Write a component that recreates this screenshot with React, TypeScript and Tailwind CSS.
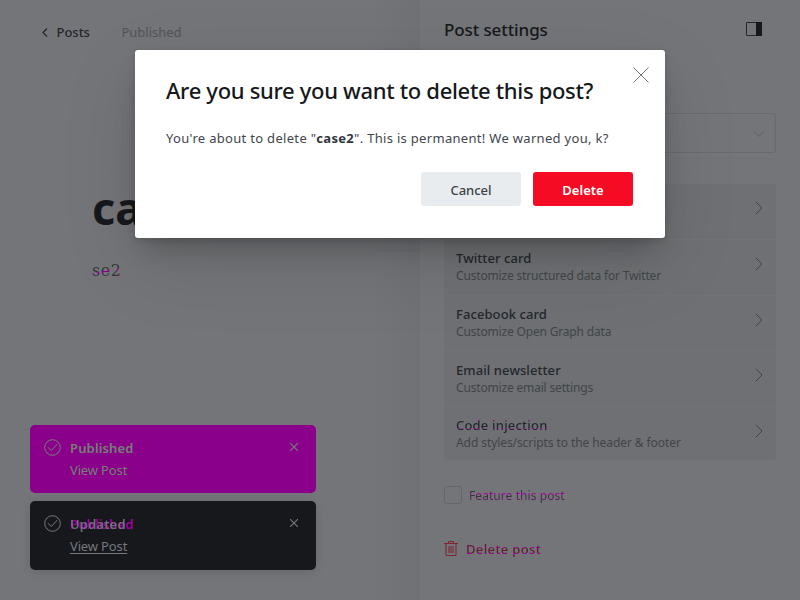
import type { ReactNode } from 'react';

const BASE = "font-['Noto_Sans','Open_Sans',sans-serif] whitespace-nowrap";

function Chevron() {
  return (
    <svg width="8" height="14" viewBox="0 0 8 14" className="mt-[17px] shrink-0" fill="none" stroke="#43484e" strokeWidth="1">
      <path d="M0.7 0.7 7 7 .7 13.3" />
    </svg>
  );
}

function SettingRow({ title, detail, last }: { title: ReactNode; detail: ReactNode; last?: boolean }) {
  return (
    <div className={`flex items-start justify-between pl-3 pr-[13px] ${last ? 'h-[53px]' : 'h-[55.8px] border-b border-[#717376]'}`}>
      <div className="pt-[9.3px]">
        <div className="h-[18px] text-[13px] font-medium leading-[18px] tracking-[0.08px] text-[#24272b]">{title}</div>
        <div className="h-[17px] text-[12px] leading-[17px] tracking-[-0.17px] text-[#424548]">{detail}</div>
      </div>
      <Chevron />
    </div>
  );
}

function CheckCircle({ color }: { color: string }) {
  return (
    <svg width="17" height="17" viewBox="0 0 17 17" className="shrink-0" fill="none" stroke={color}>
      <circle cx="8.5" cy="8.5" r="7.8" />
      <path d="m4.3 8.5 3 3 5.6-6.1" strokeLinecap="round" />
    </svg>
  );
}

function Toast({ color, surface, link, children }: { color: string; surface: string; link: string; children: ReactNode }) {
  return (
    <div className={`flex w-[286px] rounded-[5px] pl-3.5 pr-[18px] pt-[14px] ${surface}`}>
      <CheckCircle color={color} />
      <div className="ml-[9px] flex-1">
        <div className="relative h-[18px] text-[13px] font-semibold leading-[18px] tracking-[0.15px]">{children}</div>
        <div className={`mt-1 h-[18px] text-[13px] leading-[18px] tracking-[-0.14px] underline underline-offset-2 ${link}`}>View Post</div>
      </div>
      <svg width="8" height="8" viewBox="0 0 8 8" className="mt-[4px]" fill="none" stroke={color} strokeWidth="1.1">
        <path d="m0 0 8 8M8 0 0 8" />
      </svg>
    </div>
  );
}

export default function App() {
  return (
    <div className={`relative flex h-[600px] w-[800px] overflow-hidden bg-[#737578] ${BASE}`}>
      <main className="flex w-[420px] flex-col bg-[linear-gradient(90deg,#737578_0,#737578_370px,#6f7174_420px)]">
        <header className="flex h-16 items-center pl-[42px] pt-px text-[13px]">
          <svg width="6" height="9" viewBox="0 0 6 9" fill="none" stroke="#24272b" strokeWidth="1.2">
            <path d="M5 .5 1 4.5l4 4" />
          </svg>
          <span className="ml-[8.5px] w-[65px] pt-px font-medium tracking-[-0.02px] text-[#24272b]">Posts</span>
          <span className="pt-px tracking-[-0.02px] text-[#515457]">Published</span>
        </header>
        <div className="ml-[92px] mt-[112px] h-[64px] text-[45px] font-bold leading-[64px] text-[#16181b]">case2</div>
        <div className="ml-[92px] mt-[19px] h-6 w-fit bg-[linear-gradient(170deg,#343639_48%,#900090_48%,#900090_56%,#343639_57%,#343639_72%,#a000a0_73%)] bg-clip-text font-['DejaVu_Serif','Liberation_Serif',serif] text-[16px] leading-6 tracking-[0.5px] text-transparent">se2</div>
        <div className="ml-[30px] mt-[142px] flex flex-col gap-2">
          <Toast color="#748074" surface="h-[68px] bg-[#8b008b]" link="text-[#748074] decoration-[#960096]">
            <span className="text-[#748074]">Published</span>
          </Toast>
          <Toast color="#77797c" surface="h-[69px] bg-[#16181c] shadow-[0_2px_10px_rgba(0,0,0,0.12)]" link="text-[#77797c]">
            <span className="absolute left-0 top-0 text-[#a000a0]">Published</span>
            <span className="absolute left-0 top-0 text-[#77797c] opacity-90">Updated</span>
          </Toast>
        </div>
      </main>

      <aside className="flex w-[380px] flex-col pl-6 pr-6">
        <header className="flex h-[60px] items-center justify-between pr-[14px]">
          <h2 className="text-[17px] font-medium tracking-[-0.1px] text-[#16181b]">Post settings</h2>
          <svg width="16" height="14" viewBox="0 0 16 14" fill="none" className="-mt-[2px]">
            <rect x=".5" y=".5" width="15" height="13" rx=".5" stroke="#24272b" />
            <path d="M10 0h6v14h-6z" fill="#16181b" />
          </svg>
        </header>
        <div className="mt-[53px] flex h-10 items-center justify-end rounded-[3px] border border-[#696b6e] pr-[11px]">
          <svg width="10" height="6" viewBox="0 0 10 6" fill="none" stroke="#5c5f62" className="mt-0.5">
            <path d="m.4.5 4.6 4.8L9.6.5" />
          </svg>
        </div>
        <section className="mt-[31px] rounded-[3px] bg-[#6e7073]">
          <SettingRow title="Meta data" detail="Extra content for search engines" />
          <SettingRow title="Twitter card" detail="Customize structured data for Twitter" />
          <SettingRow title="Facebook card" detail="Customize Open Graph data" />
          <SettingRow title="Email newsletter" detail="Customize email settings" />
          <SettingRow
            title={<span className="bg-[linear-gradient(180deg,#24272b_4px,#960096_4px,#960096_5px,#24272b_5px,#24272b_12px,#830083_12px,#830083_13px,#24272b_13px)] bg-clip-text tracking-[0.2px] text-transparent">Code injection</span>}
            detail={<span className="tracking-[-0.08px]">Add styles/scripts to the header &amp; footer</span>}
            last
          />
        </section>
        <div className="mt-[25px] flex h-5 items-center text-[12px]">
          <span className="size-[18px] rounded-[3px] border border-[#65676a]" />
          <span className="ml-[7px] bg-[linear-gradient(180deg,#3c343c_7px,#a000a0_7px,#a000a0_9px,#3c343c_9px,#3c343c_12px,#a000a0_12px,#a000a0_13px,#3c343c_13px)] bg-clip-text pt-px tracking-[0.07px] text-transparent">Feature this post</span>
        </div>
        <div className="mt-[35px] flex h-5 items-center text-[13px]">
          <svg width="14" height="15" viewBox="0 0 14 15" fill="none" stroke="#7e2530" className="-mt-[3px]">
            <path d="M0 2.5h14M4.5 2V.5h5V2M2 2.5v12h10v-12M5 5v7M7 5v7M9 5v7" />
          </svg>
          <span className="ml-2 bg-[linear-gradient(180deg,#612030_7px,#98008b_7px,#98008b_8px,#612030_8px,#612030_13px,#98008b_13px,#98008b_15px,#612030_15px)] bg-clip-text font-medium tracking-[0.37px] text-transparent">Delete post</span>
        </div>
      </aside>

      <div role="dialog" className="absolute left-[135px] top-[50px] flex h-[188px] w-[530px] flex-col rounded-[3px] bg-white pl-[31px] pr-8 pt-[23px] shadow-[0_2px_6px_rgba(0,0,0,0.12),0_16px_26px_-8px_rgba(0,0,0,0.23),0_25px_80px_rgba(0,0,0,0.1)]">
        <div className="flex justify-between">
          <h1 className="h-[34px] text-[22px] font-medium leading-[34px] tracking-[-0.32px] text-[#16181b]">Are you sure you want to delete this post?</h1>
          <svg width="16" height="16" viewBox="0 0 16 16" fill="none" stroke="#75787b" strokeWidth="1" className="-mr-4 -mt-[6px] shrink-0">
            <path d="m.5.5 15 15m0-15-15 15" />
          </svg>
        </div>
        <p className="mt-[21px] h-5 text-[13px] leading-5 tracking-[0.31px] text-[#3f464d]">
          You're about to delete "<strong className="tracking-[0.3px] text-[#30363d]">case2</strong>". This is permanent! We warned you, k?
        </p>
        <div className="mt-6 flex justify-end gap-3 text-[13px]">
          <button className="h-[34px] w-[100px] rounded-[3px] bg-[#e8ecef] pt-[3px] font-medium text-[#3c4248]">Cancel</button>
          <button className="h-[34px] w-[100px] rounded-[3px] bg-[#f50b23] pt-[3px] font-semibold text-white">Delete</button>
        </div>
      </div>
    </div>
  );
}
